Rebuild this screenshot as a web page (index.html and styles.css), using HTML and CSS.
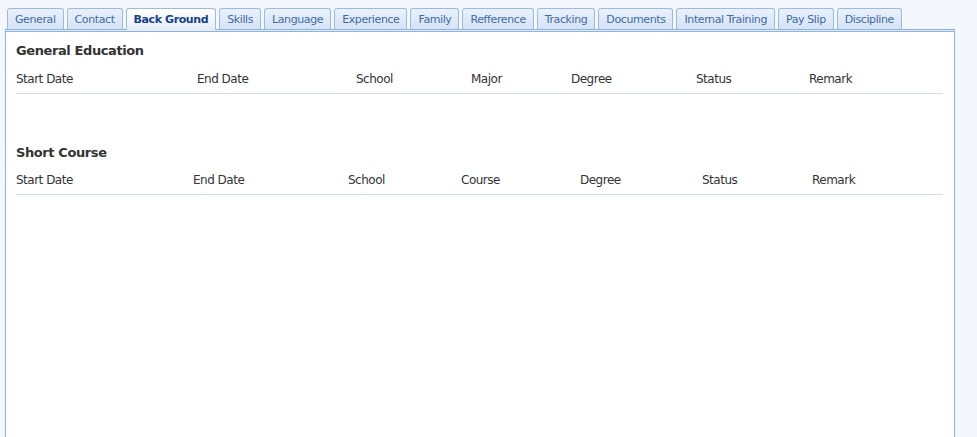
FILE: index.html
```html
<!DOCTYPE html>
<html>
<head>
<meta charset="utf-8">
<link rel="stylesheet" href="styles.css">
</head>
<body>
<div class="panel">
  <div class="tabstrip">
    <div class="tab">General</div>
    <div class="tab">Contact</div>
    <div class="tab active">Back Ground</div>
    <div class="tab">Skills</div>
    <div class="tab">Language</div>
    <div class="tab">Experience</div>
    <div class="tab">Family</div>
    <div class="tab">Refference</div>
    <div class="tab">Tracking</div>
    <div class="tab">Documents</div>
    <div class="tab">Internal Training</div>
    <div class="tab">Pay Slip</div>
    <div class="tab">Discipline</div>
  </div>
  <div class="spacer"></div>
  <div class="body">
    <section class="section">
      <h2 class="title">General Education</h2>
      <div class="grid grid-edu">
        <div>Start Date</div><div>End Date</div><div>School</div><div>Major</div><div>Degree</div><div>Status</div><div>Remark</div>
      </div>
    </section>
    <section class="section second">
      <h2 class="title">Short Course</h2>
      <div class="grid grid-course">
        <div>Start Date</div><div>End Date</div><div>School</div><div>Course</div><div>Degree</div><div>Status</div><div>Remark</div>
      </div>
    </section>
  </div>
</div>
</body>
</html>
```
FILE: styles.css
```css
html, body {
  margin: 0;
  padding: 0;
  background: #f4f8fc;
  font-family: "DejaVu Sans", Verdana, sans-serif;
  overflow: hidden;
}
.panel {
  margin-left: 5px;
  width: 950px;
  padding-top: 8px;
}
.tabstrip {
  display: flex;
  gap: 3px;
  padding-left: 2px;
  height: 21px;
}
.tab {
  box-sizing: border-box;
  height: 21px;
  padding: 0 7px;
  border: 1px solid #99bbe8;
  border-bottom: none;
  border-radius: 3px 3px 0 0;
  background: linear-gradient(#e9f1fb, #d5e3f6);
  color: #416aa3;
  font-size: 11px;
  letter-spacing: -0.4px;
  line-height: 21px;
  white-space: nowrap;
}
.tab.active {
  background: linear-gradient(#ffffff, #e4edf9);
  color: #15428b;
  font-weight: bold;
  height: 22px;
  margin-bottom: -1px;
  position: relative;
  z-index: 1;
}
.spacer {
  height: 1px;
  border: 1px solid #8db2e3;
  background: #deecfd;
}
.body {
  height: 395px;
  border-left: 1px solid #8db2e3;
  border-right: 1px solid #8db2e3;
  background: #fff;
  padding: 10px 10px 0;
}
.title {
  margin: 0;
  font-size: 13px;
  font-weight: bold;
  color: #333;
  letter-spacing: -0.4px;
  line-height: 18px;
}
.grid {
  display: grid;
  margin-top: 11px;
  font-size: 12px;
  letter-spacing: -0.5px;
  color: #333;
  line-height: 16px;
  padding-bottom: 6px;
  border-bottom: 1px solid #d0deeb;
  width: 927px;
}
.grid-edu {
  grid-template-columns: 181px 159px 115px 100px 125px 113px 1fr;
}
.grid-course {
  grid-template-columns: 177px 155px 113px 119px 122px 110px 1fr;
  margin-top: 10px;
}
.second {
  margin-top: 50px;
}
```
